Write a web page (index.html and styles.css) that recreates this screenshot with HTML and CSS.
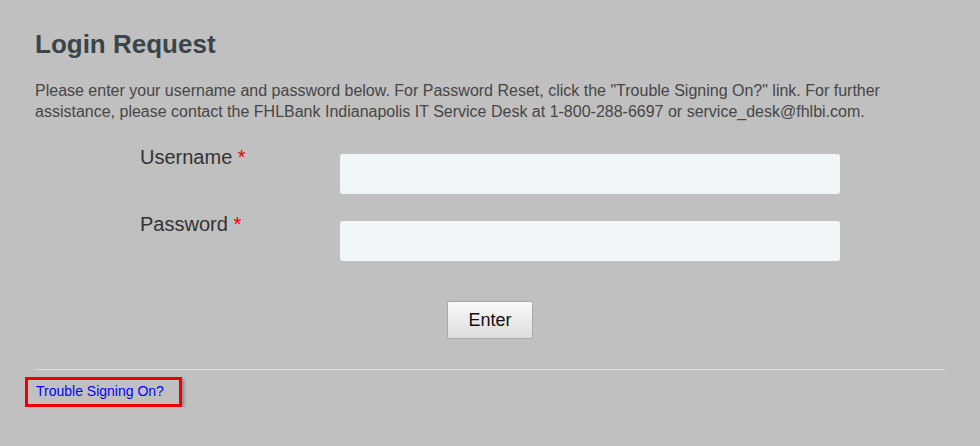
FILE: index.html
```html
<!DOCTYPE html>
<html lang="en">
<head>
    <meta charset="UTF-8">
    <title>Login Request</title>
    <link rel="stylesheet" href="styles.css">
</head>
<body>
    <div class="page">
        <h1>Login Request</h1>
        <p class="intro">Please enter your username and password below. For Password Reset, click the "Trouble Signing On?" link. For further assistance, please contact the FHLBank Indianapolis IT Service Desk at 1-800-288-6697 or service_desk@fhlbi.com.</p>
        <form class="login-form">
            <label for="username">Username <span class="req">*</span></label>
            <input type="text" id="username">
            <label for="password">Password <span class="req">*</span></label>
            <input type="password" id="password">
        </form>
        <div class="actions">
            <button type="button">Enter</button>
        </div>
        <hr>
        <div class="help">
            <a href="#">Trouble Signing On?</a>
        </div>
    </div>
</body>
</html>
```

FILE: styles.css
```css
body {
    margin: 0;
    background: #c0c0c0;
    font-family: "Liberation Sans", Arial, sans-serif;
    color: #444;
}
.page {
    padding: 29px 35px 0 35px;
}
h1 {
    margin: 0;
    font-size: 26px;
    line-height: 30px;
    color: #3b444b;
}
.intro {
    margin: 21px 0 0 0;
    font-size: 16px;
    line-height: 21px;
    color: #464646;
}
.login-form {
    display: grid;
    grid-template-columns: 200px 500px;
    row-gap: 20px;
    margin: 25px 0 0 105px;
}
.login-form label {
    font-size: 20px;
    color: #333;
    line-height: 20px;
}
.req {
    color: #e00;
}
.login-form input {
    height: 40px;
    margin-top: 7px;
    box-sizing: border-box;
    border: none;
    border-radius: 3px;
    background: #f1f6f9;
}
.actions {
    text-align: center;
    margin-top: 40px;
}
button {
    width: 86px;
    height: 38px;
    font-family: "Liberation Sans", Arial, sans-serif;
    font-size: 18px;
    color: #111;
    border: 1px solid #aaa;
    border-radius: 2px;
    background: linear-gradient(#fafafa, #dcdcdc);
}
hr {
    margin: 30px 0 0 0;
    border: none;
    border-top: 1px solid #e2e2e2;
}
.help {
    display: flex;
    margin: 7px 0 0 -10px;
}
.help a {
    padding: 3px 15px 5px 8px;
    border: 3px solid #e00;
    box-shadow: 2px 2px 3px rgba(0, 0, 0, 0.3);
    font-size: 14px;
    line-height: 16px;
    color: #00f;
    text-decoration: none;
}
```
